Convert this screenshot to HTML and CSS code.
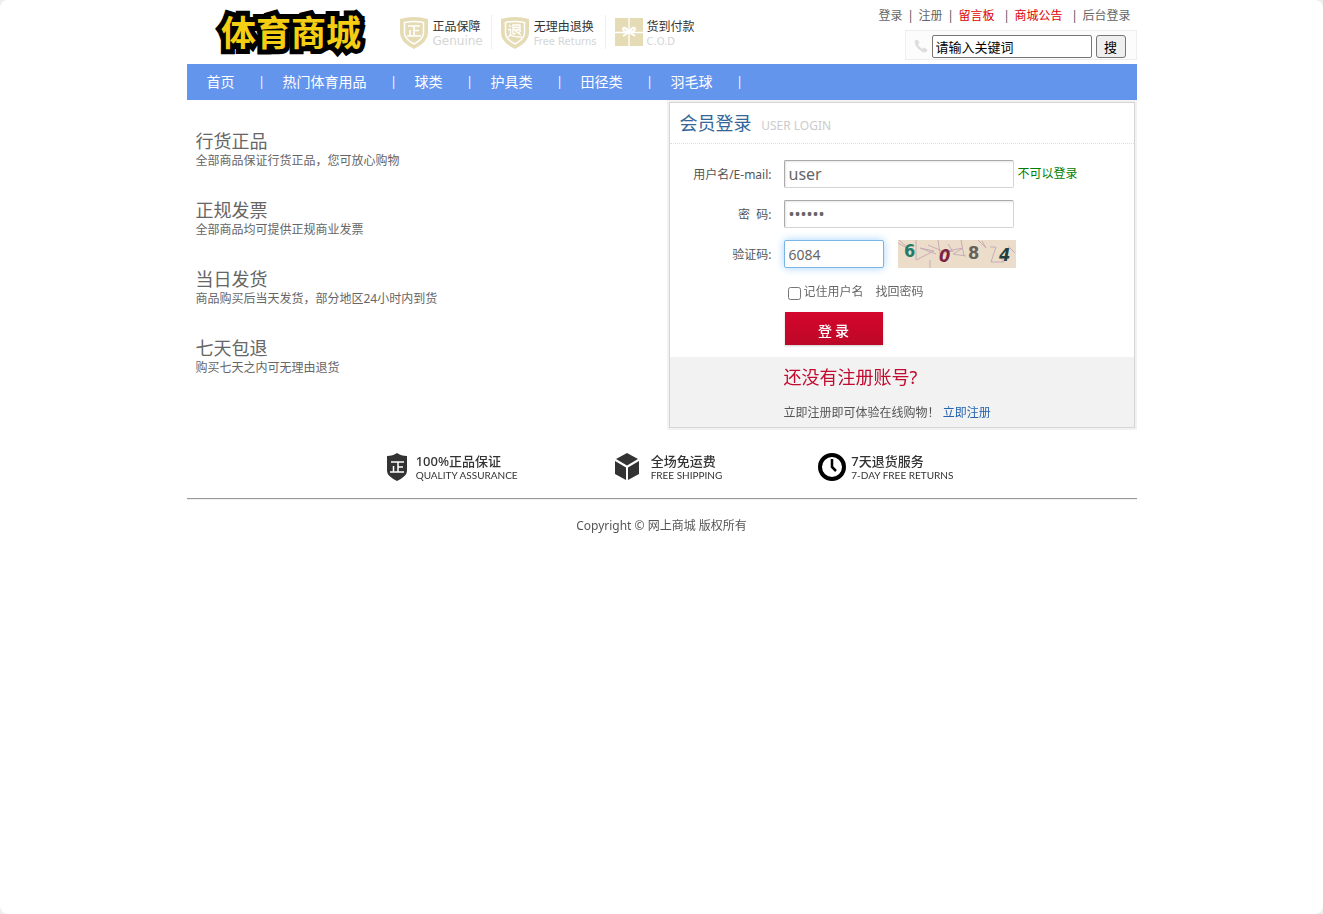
FILE: index.html
```html
<!DOCTYPE html>
<html lang="zh-CN">
<head>
<meta charset="utf-8">
<title>体育商城 - 会员登录</title>
<link rel="stylesheet" href="styles.css">
</head>
<body>
<div class="page">

<header class="header">
  <a class="logo" href="#" aria-label="体育商城">
    <svg width="160" height="56" viewBox="0 0 160 56">
      <text x="9" y="42" class="logo-shadow">体育商城</text>
      <text x="9" y="42" class="logo-text">体育商城</text>
    </svg>
  </a>
  <ul class="promise">
    <li>
      <svg width="28" height="32" viewBox="0 0 28 32">
        <path d="M0 2Q14-2 28 2V16Q28 25 14 32Q0 25 0 16Z" fill="#e5dbb5"/>
        <path d="M4.500 5.500Q14 3.500 23.500 5.500V16Q23.500 22 14 27Q4.500 22 4.500 16Z" fill="none" stroke="#fff" stroke-width="1.500"/>
        <path d="M8 9H20M14 9V19M14 13.500H19M10 13V19M7 19H21" fill="none" stroke="#fff" stroke-width="1.600"/>
      </svg>
      <p>正品保障<span class="en">Genuine</span></p>
    </li>
    <li>
      <svg width="28" height="32" viewBox="0 0 28 32">
        <path d="M0 2Q14-2 28 2V16Q28 25 14 32Q0 25 0 16Z" fill="#e5dbb5"/>
        <path d="M4.500 5.500Q14 3.500 23.500 5.500V16Q23.500 22 14 27Q4.500 22 4.500 16Z" fill="none" stroke="#fff" stroke-width="1.500"/>
        <path d="M8 8L10 10M7 12.500H9.500V18M7 20L9.500 18Q12 20 21 20M12 17V8H19V13H12M12 10.500H19M12 17.500L15 16M14 13.500L20 18M20 14L17 16" fill="none" stroke="#fff" stroke-width="1.300"/>
      </svg>
      <p>无理由退换<span class="en small">Free Returns</span></p>
    </li>
    <li>
      <svg width="28" height="32" viewBox="0 0 28 32">
        <path d="M0 1H28V29H0Z" fill="#e5dbb5"/>
        <path d="M14 1V29M0 15.500H28" stroke="#fff" stroke-width="1.300"/>
        <path d="M14 15Q10 9 8 11.500Q8 15 14 15Q20 15 20 11.500Q18 9 14 15L8 19M14 15L20 19" fill="none" stroke="#fff" stroke-width="2"/>
      </svg>
      <p>货到付款<span class="en small">C.O.D</span></p>
    </li>
  </ul>
  <div class="tools">
    <div class="toplinks">
      <a href="#">登录</a><span class="bar">|</span><a href="#">注册</a><span class="bar">|</span><a class="red" href="#">留言板</a><span class="bar wide">|</span><a class="red" href="#">商城公告</a><span class="bar wide">|</span><a href="#">后台登录</a>
    </div>
    <form class="search">
      <svg width="14" height="14" viewBox="0 0 14 14"><path d="M1 1.500L3.500 0.500L5.500 4L4 5.500Q5.500 8.500 8.500 10L10 8.500L13.500 10.500L12.500 13Q9 14.500 4.500 10Q0 5.500 1 1.500Z" fill="#ddd"/></svg>
      <input type="text" aria-label="关键词" value="请输入关键词">
      <button type="button">搜</button>
    </form>
  </div>
</header>

<nav>
  <ul class="nav">
    <li><a href="#">首页</a><span>|</span></li>
    <li><a href="#">热门体育用品</a><span>|</span></li>
    <li><a href="#">球类</a><span>|</span></li>
    <li><a href="#">护具类</a><span>|</span></li>
    <li><a href="#">田径类</a><span>|</span></li>
    <li><a href="#">羽毛球</a><span>|</span></li>
  </ul>
</nav>

<main class="main">
  <div class="reasons">
    <section><h3>行货正品</h3><p>全部商品保证行货正品，您可放心购物</p></section>
    <section><h3>正规发票</h3><p>全部商品均可提供正规商业发票</p></section>
    <section><h3>当日发货</h3><p>商品购买后当天发货，部分地区24小时内到货</p></section>
    <section><h3>七天包退</h3><p>购买七天之内可无理由退货</p></section>
  </div>

  <div class="login">
    <h2>会员登录 <small>USER LOGIN</small></h2>
    <form class="login-form">
      <div class="row">
        <label for="username">用户名/E-mail:</label>
        <input class="field" type="text" id="username" value="user">
        <span class="tip">不可以登录</span>
      </div>
      <div class="row">
        <label for="password">密&nbsp;&nbsp;码:</label>
        <input class="field password" type="password" id="password" value="123456">
      </div>
      <div class="row">
        <label for="code">验证码:</label>
        <span class="code-box"><input class="field code" type="text" id="code" value="6084"></span>
        <svg class="captcha" width="118" height="28" viewBox="0 0 118 28" role="img" aria-label="验证码图片">
          <rect width="118" height="28" fill="#ebddca"/>
          <path d="M0 3L9 8M18 0V20L36 11L22 8L38 14M30 5L44 11M40 0L42 14L54 11M50 4L55 12M44 12L65 8L55 14L68 16M80 0L88 8L84 1M92 7H98L93 22H106L102 17M110 6L117 13M1 0L8 6M63 0L66 16M32 20V28" fill="none" stroke="#c6adb5" stroke-width="1"/>
          <text x="6" y="17" fill="#237a68">6</text>
          <text x="41" y="22" fill="#7b2340" class="slant">0</text>
          <text x="70" y="19" fill="#666159">8</text>
          <text x="101" y="21" fill="#203f3d" class="slant">4</text>
        </svg>
      </div>
      <div class="remember">
        <input type="checkbox" id="remember"><label for="remember">记住用户名</label>
        <a href="#">找回密码</a>
      </div>
      <button class="submit" type="button">登 录</button>
    </form>
    <div class="register">
      <h3>还没有注册账号?</h3>
      <p>立即注册即可体验在线购物！ <a href="#">立即注册</a></p>
    </div>
  </div>
</main>

<ul class="services">
  <li>
    <svg width="25" height="28" viewBox="0 0 25 28">
      <path d="M11 0Q15 3 21 3V18Q21 23 11 28Q1 23 1 18V3Q7 3 11 0Z" fill="#333"/>
      <path d="M5 9H18M12 9V19M12 14H17M7.500 13V19M4 19H18" fill="none" stroke="#fff" stroke-width="1.500"/>
    </svg>
    <p>100%正品保证<span>QUALITY ASSURANCE</span></p>
  </li>
  <li>
    <svg width="32" height="28" viewBox="0 0 32 28">
      <path d="M13 0L24 6L13 12.500L2 6ZM1 8L12 14.500V27L1 21ZM25 8L14 14.500V27L25 21Z" fill="#333"/>
    </svg>
    <p>全场免运费<span>FREE SHIPPING</span></p>
  </li>
  <li>
    <svg width="28" height="28" viewBox="0 0 28 28">
      <circle cx="14" cy="14" r="12" fill="#fff" stroke="#000" stroke-width="4"/>
      <path d="M14 6V14L18 18" fill="none" stroke="#000" stroke-width="2.500"/>
    </svg>
    <p>7天退货服务<span>7-DAY FREE RETURNS</span></p>
  </li>
</ul>

<hr>
<footer>Copyright © 网上商城 版权所有</footer>

</div>
<script>
  var code = document.getElementById("code");
  code.focus();
  code.setSelectionRange(4, 4);
</script>
</body>
</html>
```
FILE: styles.css
```css
* { box-sizing: border-box; margin: 0; padding: 0; }
html { background: #eee; }
body { min-height: 100vh; border-radius: 8px; background: #fff; color: #555; font: 12px/18px "Noto Sans", "Noto Sans CJK SC", sans-serif; }
ul { list-style: none; }
a { color: #666; text-decoration: none; }
svg { display: block; flex: none; }
h2, h3 { font-weight: normal; }
.page { max-width: 950px; margin: 0 auto; }

/* header */
.header { display: flex; height: 64px; }
.logo { padding: 4px 0 0 25px; }
.logo svg { overflow: visible; }
.logo text { font: bold 35px "Noto Sans CJK SC", sans-serif; }
.logo-shadow { fill: #000; stroke: #000; stroke-width: 10px; stroke-linejoin: miter; stroke-miterlimit: 2; }
.logo-text { fill: #f5cd13; }
.promise { display: flex; padding: 15px 0 0 28px; }
.promise li { display: flex; gap: 5px; height: 34px; padding: 2px 8px 0 9px; border-left: 1px solid #eee; }
.promise li:first-child { border-left: 0; padding-left: 0; }
.promise li:last-child { gap: 4px; }
.promise p { color: #333; line-height: 19px; white-space: nowrap; }
.promise .en { display: block; color: #d5d5d5; font: 12px/11px "DejaVu Sans", sans-serif; }
.promise .small { font-size: 10px; }
.tools { display: flex; flex-direction: column; align-items: flex-end; margin-left: auto; }
.toplinks { height: 30px; padding: 7px 6px 0 0; white-space: nowrap; }
.toplinks .red { color: #e00000; }
.bar { display: inline-block; width: 16px; text-align: center; }
.bar.wide { width: 20px; padding-left: 4px; }
.search { display: flex; align-items: center; gap: 4px; height: 30px; padding: 2px 10px 0 8px; border: 1px solid #eee; background: #fcfcfc; }
.search input { width: 160px; height: 23px; padding: 1px 3px; border: 1px solid #767676; border-radius: 2px; font: 13px "Noto Sans CJK SC", sans-serif; color: #000; }
.search button { width: 30px; height: 23px; border: 1px solid #767676; border-radius: 3px; background: #efefef; font: 13px/19px "Noto Sans CJK SC", sans-serif; }

/* navigation */
.nav { display: flex; height: 36px; padding-left: 20px; background: #6495ed; color: #fff; font-size: 14px; line-height: 36px; }
.nav li { display: flex; }
.nav a { color: #fff; }
.nav span { width: 48px; padding-left: 6px; font-size: 12px; text-align: center; }

/* content */
.main { display: flex; justify-content: space-between; }
.reasons { display: grid; align-content: start; gap: 30px; padding: 30px 0 0 9px; color: #666; }
.reasons h3 { font-size: 18px; line-height: 22px; }
.reasons p { line-height: 17px; }

.login { width: 466px; margin: 2px; border: 1px solid #d5d5d5; outline: 2px solid #f2f2f2; }
.login h2 { height: 41px; padding-left: 10px; border-bottom: 1px dotted #ddd; color: #369; font-size: 18px; line-height: 41px; }
.login small { margin-left: 5px; color: #ccc; font-size: 12px; }
.login-form { padding: 16px 0 12px; }
.row { display: flex; align-items: center; height: 28px; margin-bottom: 12px; }
.row label { width: 102px; margin-right: 12px; padding-top: 1px; text-align: right; }
.field { width: 230px; height: 28px; padding: 0 4px; border: 1px solid #ccc; border-color: #aaa #d5d5d5 #d5d5d5 #aaa; border-radius: 2px; box-shadow: inset 1px 1px 2px #e5e5e5; color: #666; font: 16px "Noto Sans", sans-serif; outline: 0; }
.code-box { width: 114px; }
.code { width: 100px; font-size: 14px; }
.code:focus { border-color: #7ab5e5; box-shadow: 0 0 8px #a5d3ff; }
.tip { margin-left: 4px; color: #008000; }
.captcha text { font: bold 18px "DejaVu Sans Condensed", "DejaVu Sans", sans-serif; }
.captcha .slant { font-style: italic; }
.remember { display: flex; align-items: center; height: 20px; margin: 2px 0 12px 118px; padding-top: 3px; color: #666; }
.remember input { width: 13px; height: 13px; margin: 3px 3px 0 0; }
.remember a { margin-left: 12px; }
.submit { display: block; width: 98px; height: 33px; margin-left: 115px; padding-top: 3px; border: 0; background: linear-gradient(#d4062c, #bd0828); box-shadow: 0 1px 2px #ccc; color: #fff; font: 500 14px "Noto Sans CJK SC", sans-serif; }
.register { height: 70px; padding: 7px 0 0 114px; background: #f2f2f2; }
.register h3 { margin-bottom: 14px; color: #c10b2f; font-size: 18px; line-height: 26px; }
.register a { color: #2563ae; }

/* services and footer */
.services { display: flex; justify-content: center; gap: 96px; padding: 23px 0 17px 16px; color: #333; }
.services li { display: flex; gap: 5px; }
.services p { font-size: 13px; font-weight: 500; line-height: 16px; white-space: nowrap; }
.services span { display: block; font: 10px/12px Lato, sans-serif; }
hr { border: 0; border-top: 1px solid #999; border-bottom: 1px solid #eee; }
footer { padding-top: 17px; text-align: center; }
```
